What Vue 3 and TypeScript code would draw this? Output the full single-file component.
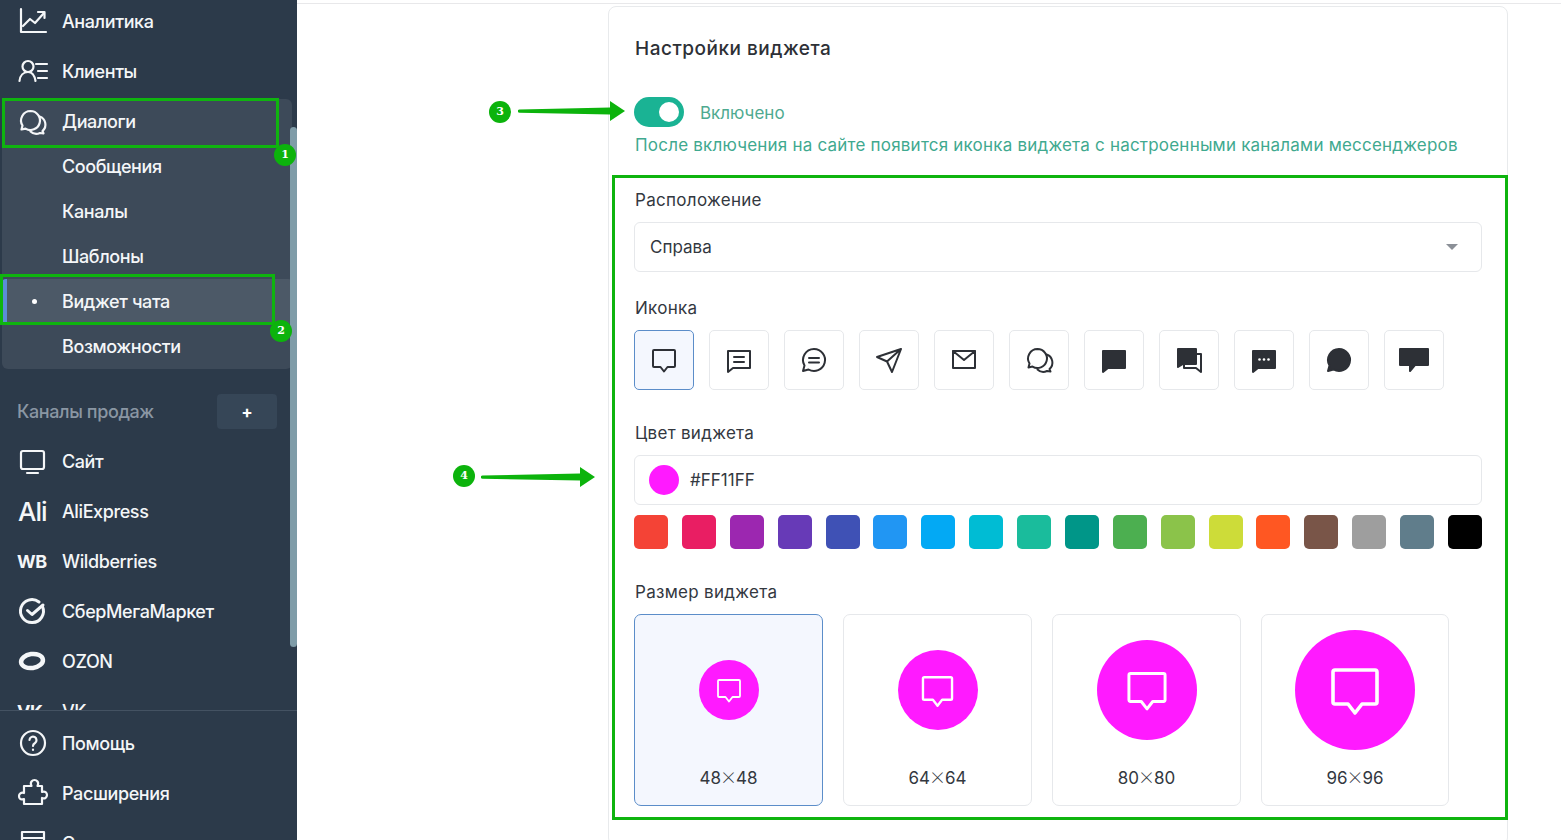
<script setup lang="ts">
interface Glyph {
  d: string
  fill?: boolean
}

interface NavItem {
  label: string
  icon?: Glyph[]
  logo?: string
  heavy?: boolean
}

const bubble = 'M4 4h20a1 1 0 0 1 1 1v15a1 1 0 0 1-1 1h-6.500L14 25.500 10.500 21H4a1 1 0 0 1-1-1V5a1 1 0 0 1 1-1z'

const topItems: NavItem[] = [
  { label: 'Аналитика', icon: [{ d: 'M3 2v23h25' }, { d: 'M5 19l7-7 5 4 9-10' }, { d: 'M20 5h6.500v6' }] },
  { label: 'Клиенты', icon: [{ d: 'M10 4a5.500 5.500 0 1 1 0 11 5.500 5.500 0 0 1 0-11z' }, { d: 'M1.500 24c.5-5.500 4-9 8.500-9s6.500 3 7.500 9' }, { d: 'M18 7h11M20 14h9M20 21h9' }] },
]

const dialogs: Glyph[] = [
  { d: 'M12.500 3a9.500 9.500 0 1 1-5 17.600L3.500 21.500l1-4A9.500 9.500 0 0 1 12.500 3z' },
  { d: 'M21.500 8.500a8.500 8.500 0 0 1 3 14.500l1 2.500-3.500-.5a8.500 8.500 0 0 1-9.500-1.500' },
]

const subItems = ['Сообщения', 'Каналы', 'Шаблоны', 'Виджет чата', 'Возможности']

const channels: NavItem[] = [
  { label: 'Сайт', icon: [{ d: 'M5 4h19a2 2 0 0 1 2 2v14a2 2 0 0 1-2 2H5a2 2 0 0 1-2-2V6a2 2 0 0 1 2-2z' }, { d: 'M9 26h11' }] },
  { label: 'AliExpress', logo: 'Ali' },
  { label: 'Wildberries', logo: 'WB' },
  { label: 'СберМегаМаркет', heavy: true, icon: [{ d: 'M24.500 9.500A11.500 11.500 0 1 1 21 5' }, { d: 'M9.500 13.500l4.500 4L25 8' }] },
  { label: 'OZON', logo: 'ring' },
  { label: 'VK', logo: 'VK' },
]

const bottomItems: NavItem[] = [
  { label: 'Помощь', icon: [{ d: 'M15 3a12 12 0 1 1 0 24 12 12 0 0 1 0-24z' }, { d: 'M11.500 12a3.500 3.500 0 1 1 5.500 3c-1.300.8-2 1.500-2 3' }, { d: 'M15 21.500v.5' }] },
  { label: 'Расширения', icon: [{ d: 'M9 8h4.500c-2-4 1-6 3-6s5 2 3 6H24v6c3-1.500 5 1 5 3s-2 4.500-5 3v6H6v-5c-4 1.500-5-1-5-3s2-4 5-3V8z' }] },
  { label: 'Счета', icon: [{ d: 'M4 4h22v20H4z' }, { d: 'M4 10h22' }] },
]

const widgetIcons: Glyph[][] = [
  [{ d: bubble }],
  [{ d: 'M3 5h22v17H8l-5 4z' }, { d: 'M9 11h10M9 16h10' }],
  [{ d: 'M14 3a11 11 0 1 1-5.500 20.500L3 25l1.500-5.500A11 11 0 0 1 14 3z' }, { d: 'M9 12h10M9 16.500h10' }],
  [{ d: 'M26 3L2 11l10 4.500L17 26zM26 3L12 15.500' }],
  [{ d: 'M3 5h22v17H3zM3 5l11 9 11-9' }],
  dialogs,
  [{ d: 'M3 5h22v17H8l-5 4z', fill: true }],
  [{ d: 'M3 3h18v15H8l-5 3z', fill: true }, { d: 'M21 8h5v18l-5-4H9v-4' }],
  [{ d: 'M3 5h22v17H8l-5 4z', fill: true }],
  [{ d: 'M14 3a11 11 0 1 1-5.500 20.500L3 25l1.500-5.500A11 11 0 0 1 14 3z', fill: true }],
  [{ d: 'M0 3h28v16H15l-5 6v-6H0z', fill: true }],
]

const swatches = [
  '#f44336', '#e91e63', '#9c27b0', '#673ab7', '#3f51b5', '#2196f3',
  '#03a9f4', '#00bcd4', '#1abc9c', '#009688', '#4caf50', '#8bc34a',
  '#cddc39', '#ff5722', '#795548', '#9e9e9e', '#607d8b', '#000000',
]

const sizes = [
  { label: 48, circle: 60, icon: 28 },
  { label: 64, circle: 80, icon: 37 },
  { label: 80, circle: 100, icon: 46 },
  { label: 96, circle: 120, icon: 56 },
]
</script>

<template>
  <div class="page">
    <aside class="sidebar">
      <div class="nav-scroll">
        <a v-for="item in topItems" :key="item.label" class="nav-row">
          <svg class="nav-icon" viewBox="0 0 28 28"><path v-for="g in item.icon" :key="g.d" :d="g.d" /></svg>
          <span>{{ item.label }}</span>
        </a>

        <div class="group">
          <a class="nav-row group-head">
            <svg class="nav-icon" viewBox="0 0 28 28"><path v-for="g in dialogs" :key="g.d" :d="g.d" /></svg>
            <span>Диалоги</span>
          </a>
          <a
            v-for="sub in subItems"
            :key="sub"
            class="sub-row"
            :class="{ active: sub === 'Виджет чата' }"
          >{{ sub }}</a>
        </div>

        <div class="section-head">
          <span>Каналы продаж</span>
          <button class="add-btn">+</button>
        </div>

        <a v-for="item in channels" :key="item.label" class="nav-row">
          <span v-if="item.logo === 'Ali'" class="logo logo-ali">Ali</span>
          <span v-else-if="item.logo === 'WB' || item.logo === 'VK'" class="logo logo-bold">{{ item.logo }}</span>
          <svg v-else-if="item.logo === 'ring'" class="nav-icon" viewBox="0 0 28 28">
            <ellipse cx="14" cy="14" rx="11" ry="7" transform="rotate(-8 14 14)" class="ring" />
          </svg>
          <svg v-else class="nav-icon" :class="{ heavy: item.heavy }" viewBox="0 0 28 28"><path v-for="g in item.icon" :key="g.d" :d="g.d" /></svg>
          <span>{{ item.label }}</span>
        </a>

        <div class="scroll-thumb"></div>
      </div>

      <div class="nav-bottom">
        <a v-for="item in bottomItems" :key="item.label" class="nav-row">
          <svg class="nav-icon" viewBox="0 0 30 30"><path v-for="g in item.icon" :key="g.d" :d="g.d" /></svg>
          <span>{{ item.label }}</span>
        </a>
      </div>
    </aside>

    <main class="content">
      <section class="card">
        <h2 class="card-title">Настройки виджета</h2>

        <div class="switch-row">
          <span class="switch"><span class="knob"></span></span>
          <span class="switch-text">Включено</span>
        </div>
        <p class="hint">После включения на сайте появится иконка виджета с настроенными каналами мессенджеров</p>

        <div class="field first">
          <div class="field-label">Расположение</div>
          <div class="box select">
            <span>Справа</span>
            <i class="caret"></i>
          </div>
        </div>

        <div class="field tight">
          <div class="field-label">Иконка</div>
          <div class="icon-row">
            <button
              v-for="(glyphs, i) in widgetIcons"
              :key="i"
              class="icon-btn"
              :class="{ selected: i === 0 }"
            >
              <svg class="widget-icon" viewBox="0 0 28 28">
                <path v-for="g in glyphs" :key="g.d" :d="g.d" :class="{ solid: g.fill }" />
                <g v-if="i === 8" class="dots">
                  <circle cx="9.500" cy="13.500" r="1.300" />
                  <circle cx="14" cy="13.500" r="1.300" />
                  <circle cx="18.500" cy="13.500" r="1.300" />
                </g>
              </svg>
            </button>
          </div>
        </div>

        <div class="field">
          <div class="field-label">Цвет виджета</div>
          <div class="box color-box">
            <span class="color-dot"></span>
            <span>#FF11FF</span>
          </div>
          <div class="swatches">
            <span
              v-for="c in swatches"
              :key="c"
              class="swatch"
              :style="{ background: c }"
            ></span>
          </div>
        </div>

        <div class="field">
          <div class="field-label">Размер виджета</div>
          <div class="size-row">
            <div
              v-for="(s, i) in sizes"
              :key="s.label"
              class="size-card"
              :class="{ selected: i === 0 }"
            >
              <div class="size-zone">
                <div class="size-circle" :style="{ width: s.circle + 'px', height: s.circle + 'px' }">
                  <svg
                    class="size-icon"
                    viewBox="0 0 28 28"
                    :style="{ width: s.icon + 'px', height: s.icon + 'px' }"
                  ><path :d="bubble" /></svg>
                </div>
              </div>
              <div class="size-label">{{ s.label }}<span class="times">×</span>{{ s.label }}</div>
            </div>
          </div>
        </div>
      </section>
    </main>

    <!-- разметка поверх скриншота -->
    <div class="mark frame-dialogs"></div>
    <div class="mark frame-widget"></div>
    <div class="mark frame-settings"></div>
    <span class="badge badge-1">1</span>
    <span class="badge badge-2">2</span>
    <span class="badge badge-3">3</span>
    <span class="badge badge-4">4</span>
    <svg class="arrow arrow-3" viewBox="0 0 107 22"><path d="M1.500 9.500L92 7.500V1l15 10-15 10v-6.500L1.500 12.800a1.600 1.600 0 0 1 0-3.300z" /></svg>
    <svg class="arrow arrow-4" viewBox="0 0 114 22"><path d="M1.500 9.500L99 7.500V1l15 10-15 10v-6.500L1.500 12.800a1.600 1.600 0 0 1 0-3.300z" /></svg>
  </div>
</template>

<style>
html,
body {
  margin: 0;
  overflow: hidden;
  background: #fff;
}
</style>

<style scoped>
.page {
  position: relative;
  display: flex;
  width: 1561px;
  height: 840px;
  overflow: hidden;
  font-family: Inter, "Noto Sans", sans-serif;
  color: #33383f;
}

.sidebar {
  display: flex;
  flex-direction: column;
  flex: 0 0 297px;
  height: 840px;
  overflow: hidden;
  background: #2c3a4a;
  color: #f4f6f8;
  font-size: 18px;
}

.nav-scroll {
  position: relative;
  flex: none;
  height: 714px;
  overflow: hidden;
  padding-top: 1px;
  margin-top: -5px;
  box-sizing: content-box;
}

.nav-row {
  display: flex;
  flex: none;
  align-items: center;
  height: 50px;
  padding-left: 18px;
  font-weight: 500;
  letter-spacing: -0.4px;
}

.nav-icon {
  flex: none;
  width: 28px;
  height: 28px;
  margin-right: 16px;
  overflow: visible;
  fill: none;
  stroke: #f4f6f8;
  stroke-width: 2.200;
  stroke-linecap: round;
  stroke-linejoin: round;
}

.nav-icon.heavy {
  stroke-width: 3;
}

.ring {
  stroke-width: 4.500;
}

.logo {
  flex: none;
  width: 44px;
  color: #f4f6f8;
}

.logo-ali {
  font-size: 26px;
  font-weight: 500;
  letter-spacing: -1px;
}

.logo-bold {
  margin-left: -1px;
  margin-right: 1px;
  font-size: 18px;
  font-weight: 700;
}

.group {
  width: 290px;
  margin-top: 3px;
  margin-left: 2px;
  background: #3d4a59;
  border-radius: 6px;
  box-sizing: border-box;
}

.group-head {
  height: 45px;
  padding-left: 16px;
}

.sub-row {
  display: flex;
  align-items: center;
  height: 45px;
  padding-left: 60px;
  font-weight: 500;
  letter-spacing: -0.4px;
  box-sizing: border-box;
}

.sub-row.active {
  position: relative;
  background: #4c5967;
  border-left: 5px solid #5b8dd6;
  border-radius: 4px;
  padding-left: 55px;
}

.sub-row.active::before {
  content: "";
  position: absolute;
  left: 25px;
  top: 20px;
  width: 5px;
  height: 5px;
  border-radius: 50%;
  background: #fff;
}

.section-head {
  display: flex;
  align-items: center;
  justify-content: space-between;
  height: 35px;
  margin-top: 25px;
  margin-bottom: 7px;
  padding: 0 20px 0 17px;
  color: #8a96a3;
  font-weight: 500;
  letter-spacing: -0.4px;
}

.add-btn {
  width: 60px;
  height: 35px;
  border: 0;
  border-radius: 4px;
  background: #364657;
  color: #fff;
  font-family: inherit;
  font-size: 17px;
  font-weight: 700;
}

.scroll-thumb {
  position: absolute;
  left: 290px;
  top: 132px;
  width: 7px;
  height: 520px;
  border-radius: 4px;
  background: #7f9ca8;
}

.nav-bottom {
  border-top: 1px solid #445262;
  padding-top: 7px;
}

.nav-bottom .nav-icon {
  width: 30px;
  height: 30px;
  margin-right: 14px;
}

.content {
  flex: 1;
  margin-top: 3px;
  padding-left: 311px;
  border-top: 1px solid #e8e8ea;
}

.card {
  width: 900px;
  height: 840px;
  margin-top: 2px;
  padding: 29px 25px 0;
  box-sizing: border-box;
  border: 1px solid #e8eaec;
  border-radius: 8px;
  background: #fff;
}

.card-title {
  margin: 0;
  padding-left: 1px;
  font-size: 19px;
  font-weight: 500;
  line-height: 26px;
  letter-spacing: 0.5px;
  color: #2d3036;
}

.switch-row {
  display: flex;
  align-items: center;
  margin-top: 35px;
}

.switch {
  position: relative;
  width: 50px;
  height: 30px;
  border-radius: 15px;
  background: #1ab394;
}

.knob {
  position: absolute;
  top: 5px;
  right: 5px;
  width: 20px;
  height: 20px;
  border-radius: 50%;
  background: #fff;
}

.switch-text {
  margin-left: 16px;
  padding-top: 2px;
  font-size: 17px;
  color: #4eaa90;
}

.hint {
  margin: 6px 0 0;
  padding-left: 1px;
  font-size: 17px;
  line-height: 24px;
  letter-spacing: 0.21px;
  color: #3fa98f;
}

.field {
  margin-top: 31px;
}

.field.tight {
  margin-top: 24px;
}

.field-label {
  margin-bottom: 10px;
  padding-left: 1px;
  font-size: 17px;
  line-height: 24px;
  letter-spacing: 0.3px;
}

.box {
  display: flex;
  align-items: center;
  height: 50px;
  box-sizing: border-box;
  border: 1px solid #e6e8eb;
  border-radius: 6px;
  font-size: 17px;
}

.select {
  justify-content: space-between;
  padding: 0 23px 0 15px;
}

.caret {
  width: 0;
  height: 0;
  border-left: 6px solid transparent;
  border-right: 6px solid transparent;
  border-top: 6px solid #8b9097;
}

.icon-row {
  display: flex;
  gap: 15px;
}

.icon-btn {
  display: flex;
  align-items: center;
  justify-content: center;
  width: 60px;
  height: 60px;
  padding: 0;
  box-sizing: border-box;
  border: 1px solid #e6e8eb;
  border-radius: 5px;
  background: #fff;
}

.icon-btn.selected,
.size-card.selected {
  border-color: #5b8dc9;
  background: #f4f7fe;
}

.widget-icon {
  width: 28px;
  height: 28px;
  overflow: visible;
  fill: none;
  stroke: #2d3036;
  stroke-width: 2;
  stroke-linejoin: round;
  stroke-linecap: round;
}

.widget-icon .solid {
  fill: #2d3036;
}

.dots {
  fill: #fff;
  stroke: none;
}

.color-box {
  padding-left: 14px;
}

.color-dot {
  width: 30px;
  height: 30px;
  margin-right: 11px;
  border-radius: 50%;
  background: #ff1aff;
}

.swatches {
  display: flex;
  justify-content: space-between;
  margin-top: 10px;
}

.swatch {
  width: 34px;
  height: 34px;
  border-radius: 5px;
}

.size-row {
  display: flex;
  gap: 20px;
}

.size-card {
  width: 189px;
  height: 192px;
  box-sizing: border-box;
  border: 1px solid #e6e8eb;
  border-radius: 7px;
}

.size-card:last-child {
  width: 188px;
}

.size-zone {
  display: flex;
  align-items: center;
  justify-content: center;
  height: 150px;
}

.size-circle {
  display: flex;
  align-items: center;
  justify-content: center;
  border-radius: 50%;
  background: #ff1aff;
}

.size-icon {
  fill: none;
  stroke: #fff;
  stroke-width: 1.800;
  stroke-linejoin: round;
}

.size-label {
  font-size: 17px;
  line-height: 24px;
  text-align: center;
}

.times {
  margin: 0 -1px;
  font-family: "Noto Sans CJK SC", sans-serif;
  font-weight: 300;
}

.mark {
  position: absolute;
  box-sizing: border-box;
  border: 3px solid #0fb40f;
  pointer-events: none;
}

.frame-dialogs {
  left: 2px;
  top: 98px;
  width: 277px;
  height: 50px;
}

.frame-widget {
  left: 0;
  top: 274px;
  width: 275px;
  height: 51px;
}

.frame-settings {
  left: 612px;
  top: 175px;
  width: 896px;
  height: 645px;
}

.badge {
  position: absolute;
  width: 22px;
  height: 22px;
  border-radius: 50%;
  background: #0cb30c;
  color: #fff;
  font-family: "DejaVu Serif", serif;
  font-size: 11px;
  font-weight: 700;
  line-height: 22px;
  text-align: center;
}

.badge-1 {
  left: 274px;
  top: 144px;
}

.badge-2 {
  left: 270px;
  top: 320px;
}

.badge-3 {
  left: 489px;
  top: 101px;
}

.badge-4 {
  left: 453px;
  top: 465px;
}

.arrow {
  position: absolute;
  height: 22px;
  fill: #0cb30c;
}

.arrow-3 {
  left: 518px;
  top: 100px;
  width: 107px;
}

.arrow-4 {
  left: 481px;
  top: 466px;
  width: 114px;
}
</style>
